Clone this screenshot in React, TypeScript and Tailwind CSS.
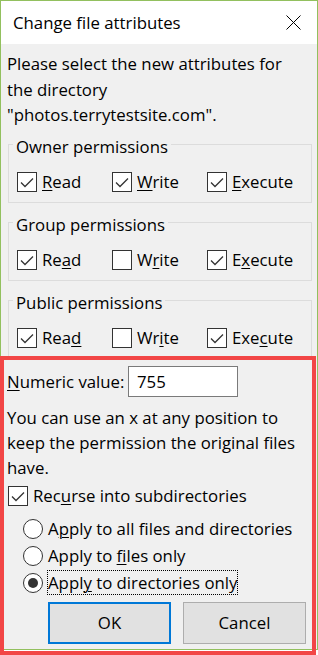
import React from "react";

function U({ children }: { children: React.ReactNode }) {
  return <span className="underline decoration-1 underline-offset-[2px]">{children}</span>;
}

function Box({ checked }: { checked: boolean }) {
  return (
    <span className="w-[20px] h-[20px] border border-[#333333] bg-white flex items-center justify-center shrink-0">
      {checked && (
        <svg width="18" height="18" viewBox="0 0 18 18">
          <polyline points="3,9.5 7,13.5 15,5.5" fill="none" stroke="#333333" strokeWidth="1.3" />
        </svg>
      )}
    </span>
  );
}

function Radio({ checked }: { checked: boolean }) {
  return (
    <span className="w-[20px] h-[20px] rounded-full border border-[#333333] bg-white flex items-center justify-center shrink-0">
      {checked && <span className="w-[10px] h-[10px] rounded-full bg-[#333333]" />}
    </span>
  );
}

function Perm({ checked, label }: { checked: boolean; label: React.ReactNode }) {
  return (
    <div className="w-[95px] h-[25px] flex items-center gap-[5px]">
      <Box checked={checked} />
      <span className="leading-[25px]">{label}</span>
    </div>
  );
}

function Group({
  title,
  first,
  items,
}: {
  title: string;
  first?: boolean;
  items: { checked: boolean; label: React.ReactNode }[];
}) {
  return (
    <fieldset
      className={
        "ml-[1px] border border-[#dcdcdc] pb-[8px] " + (first ? "mt-[2px]" : "mt-[4.5px]")
      }
    >
      <legend className="ml-[4px] px-[3px] pt-[4px] leading-[25px]">{title}</legend>
      <div className="mt-[10.5px] pl-[8px] flex">
        {items.map((it, i) => (
          <Perm key={i} checked={it.checked} label={it.label} />
        ))}
      </div>
    </fieldset>
  );
}

export default function App() {
  return (
    <div className="relative w-[318px] h-[655px] bg-white font-['Open_Sans',sans-serif] text-[16.8px] text-black">
      <div className="w-[318px] h-[650px] border border-[#92c05e] flex flex-col bg-[#f0f0f0]">
        <div className="h-[43px] shrink-0 bg-white flex items-center justify-between pl-[12px] pr-[16px]">
          <span className="leading-[25px]">Change file attributes</span>
          <svg width="15" height="15" viewBox="0 0 15 15">
            <line x1="0.5" y1="0.5" x2="14.5" y2="14.5" stroke="#000" strokeWidth="1" />
            <line x1="14.5" y1="0.5" x2="0.5" y2="14.5" stroke="#000" strokeWidth="1" />
          </svg>
        </div>
        <div className="flex flex-col pl-[6px] pr-[5px]">
          <p className="pt-[7px] leading-[25.5px]">
            Please select the new attributes for
            <br />
            the directory
            <br />
            "photos.terrytestsite.com".
          </p>
          <Group
            first
            title="Owner permissions"
            items={[
              { checked: true, label: <><U>R</U>ead</> },
              { checked: true, label: <><U>W</U>rite</> },
              { checked: true, label: <><U>E</U>xecute</> },
            ]}
          />
          <Group
            title="Group permissions"
            items={[
              { checked: true, label: <>Re<U>a</U>d</> },
              { checked: false, label: <>W<U>r</U>ite</> },
              { checked: true, label: <>E<U>x</U>ecute</> },
            ]}
          />
          <Group
            title="Public permissions"
            items={[
              { checked: true, label: <>Rea<U>d</U></> },
              { checked: false, label: <>Wr<U>i</U>te</> },
              { checked: true, label: <>Exe<U>c</U>ute</> },
            ]}
          />
          <div className="mt-[7px] h-[31px] flex items-center">
            <span className="w-[121px] leading-[25px]">
              <U>N</U>umeric value:
            </span>
            <div className="w-[110px] h-[31px] border border-[#7a7a7a] bg-white flex items-center pl-[8px]">
              755
            </div>
          </div>
          <p className="mt-[7.5px] leading-[25px]">
            You can use an x at any position to
            <br />
            keep the permission the original files
            <br />
            have.
          </p>
          <div className="mt-[3.5px] h-[25px] ml-[1px] flex items-center gap-[5px]">
            <Box checked />
            <span className="leading-[25px]">
              Rec<U>u</U>rse into subdirectories
            </span>
          </div>
          <div className="mt-[8px] ml-[16px] flex flex-col gap-[2px]">
            <div className="h-[25px] flex items-center gap-[4px]">
              <Radio checked={false} />
              <span className="leading-[23px] border border-transparent">
                A<U>p</U>ply to all files and directories
              </span>
            </div>
            <div className="h-[25px] flex items-center gap-[4px]">
              <Radio checked={false} />
              <span className="leading-[23px] border border-transparent">
                Apply to <U>f</U>iles only
              </span>
            </div>
            <div className="h-[25px] flex items-center gap-[4px]">
              <Radio checked />
              <span className="leading-[23px] border border-dotted border-black">
                Appl<U>y</U> to directories only
              </span>
            </div>
          </div>
          <div className="mt-[6.5px] ml-[41px] flex gap-[12px]">
            <button className="w-[123px] h-[42px] border-2 border-[#0078d7] bg-[#e1e1e1] flex items-center justify-center">
              OK
            </button>
            <button className="w-[123px] h-[42px] border border-[#adadad] bg-[#e1e1e1] flex items-center justify-center">
              Cancel
            </button>
          </div>
        </div>
      </div>
      <div className="absolute left-0 top-[356px] w-[316px] h-[299px] border-4 border-[#f24646] pointer-events-none" />
    </div>
  );
}
